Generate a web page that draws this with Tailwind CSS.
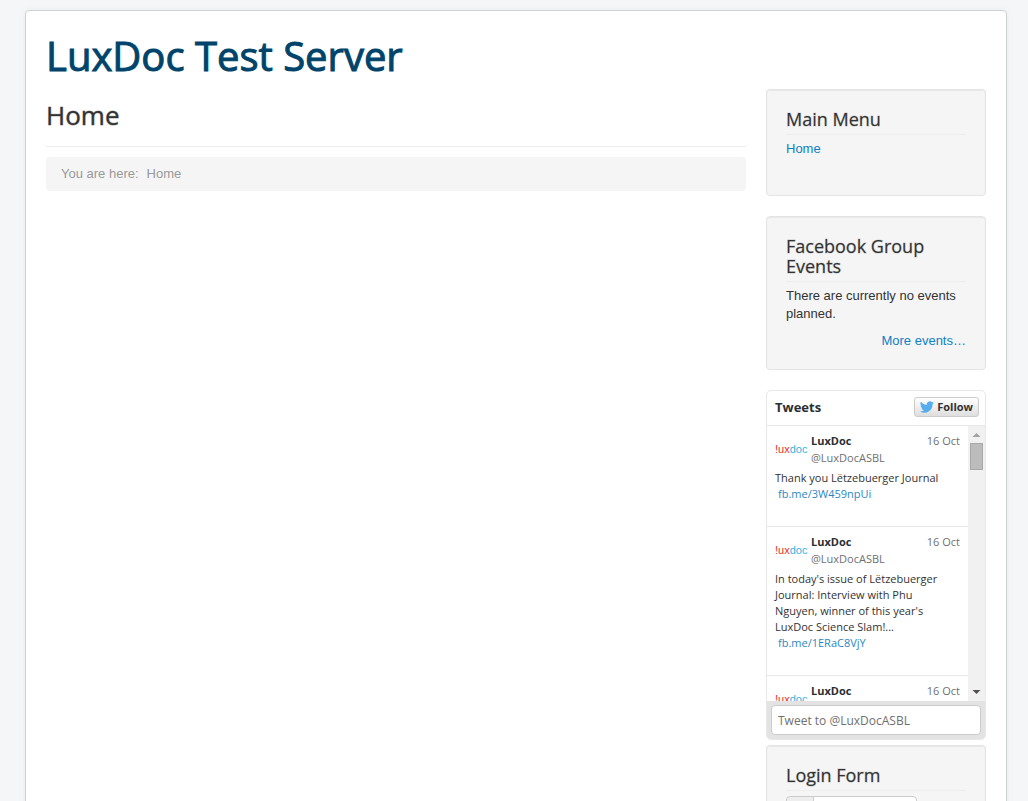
<!DOCTYPE html>
<html lang="en">
<head>
<meta charset="utf-8">
<title>Home</title>
<script src="https://cdn.jsdelivr.net/npm/@tailwindcss/browser@4"></script>
</head>
<body class="h-screen overflow-hidden bg-[#f4f6f7] pt-[10px] pr-[21px] pl-[25px] font-['Liberation_Sans',Arial,sans-serif] text-[13px] leading-[18px] text-[#333]">
<svg class="hidden" aria-hidden="true">
  <symbol id="bird" viewBox="0 0 24 24"><path d="M23.9 4.6a10 10 0 0 1-2.8.8 4.9 4.9 0 0 0 2.2-2.7c-1 .6-2 1-3.1 1.2a4.9 4.9 0 0 0-8.4 4.5C7.700 8.200 4.100 6.200 1.600 3.200a4.900 4.900 0 0 0 1.500 6.600 4.900 4.900 0 0 1-2.200-.6v.1a4.900 4.900 0 0 0 3.900 4.800 5 5 0 0 1-2.200.1 4.900 4.900 0 0 0 4.600 3.400A9.900 9.900 0 0 1 0 19.500a14 14 0 0 0 7.500 2.200c9.100 0 14-7.500 14-14v-.6a10 10 0 0 0 2.400-2.500z" fill="#55acee"/></symbol>
</svg>
<div class="min-h-[900px] rounded border border-[#cfd2d4] bg-white p-5 shadow-[0_0_6px_rgba(0,0,0,0.05)]">
  <header>
    <a href="#" class="block font-['Open_Sans',sans-serif] text-[40px] leading-[50px] text-[#00446b] [-webkit-text-stroke:1px_#00446b]">LuxDoc Test Server</a>
  </header>
  <div class="mt-2 flex items-start gap-5">
    <main class="min-w-0 flex-1">
      <h1 class="border-b border-[#eee] pt-2 pb-[13px] font-['Open_Sans',sans-serif] text-[26px] leading-9 [-webkit-text-stroke:1px_#33333370]">Home</h1>
      <nav aria-label="Breadcrumb" class="mt-[10px] rounded bg-[#f5f5f5] px-[15px] py-2 text-[#999]">
        <ul class="flex gap-2"><li>You are here:</li><li>Home</li></ul>
      </nav>
    </main>
    <aside class="w-[220px] shrink-0">
      <section class="mb-5 rounded border border-[#e3e3e3] bg-[#f5f5f5] p-[19px] pb-[37px] shadow-[inset_0_1px_1px_rgba(0,0,0,0.05)]">
        <h3 class="mb-[5px] border-b border-[#eee] pb-[5px] font-['Open_Sans',sans-serif] text-lg leading-5 [-webkit-text-stroke:1px_#33333340]">Main Menu</h3>
        <ul><li><a href="#" class="text-[#0d80c8]">Home</a></li></ul>
      </section>
      <section class="mb-5 rounded border border-[#e3e3e3] bg-[#f5f5f5] p-[19px] shadow-[inset_0_1px_1px_rgba(0,0,0,0.05)]">
        <h3 class="mb-[5px] border-b border-[#eee] pb-[5px] font-['Open_Sans',sans-serif] text-lg leading-5 [-webkit-text-stroke:1px_#33333340]">Facebook Group Events</h3>
        <p>There are currently no events planned.</p>
        <p class="mt-[9px] text-right"><a href="#" class="text-[#0d80c8]">More events…</a></p>
      </section>
      <section class="mb-[5px] overflow-hidden rounded-[5px] border border-[#e8e8e8] bg-white font-['Open_Sans',sans-serif] text-[11px] leading-4">
        <header class="flex h-[35px] items-center justify-between border-b border-[#e8e8e8] pr-[6px] pb-[2px] pl-2">
          <h2 class="text-[13px] font-bold text-[#292f33]">Tweets</h2>
          <button class="flex h-5 items-center gap-[3px] rounded-[3px] border border-[#ccc] bg-linear-to-b from-white to-[#dedede] px-[5px] text-[11px] font-bold text-[#333]"><svg class="size-[14px]" aria-hidden="true"><use href="#bird"/></svg>Follow</button>
        </header>
        <div class="flex h-[275px]">
          <ol class="min-w-0 flex-1 overflow-hidden">
            <li class="h-[101px] border-b border-[#e8e8e8] px-2 pt-[7px]">
              <div class="flex gap-1"><span class="w-8 shrink-0 pt-2 font-['Liberation_Sans',sans-serif] text-[11px] text-[#30b6dc]"><span class="text-[#e8302a]">!ux</span>doc</span><a href="#" class="flex-1"><b class="mb-px block text-[#292f33]">LuxDoc</b><span class="block text-[#707070]">@LuxDocASBL</span></a><time class="text-[#707070]">16 Oct</time></div>
              <p class="mt-1">Thank you Lëtzebuerger Journal<br><a href="#" class="ml-[3px] text-[#2b88c4]">fb.me/3W459npUi</a></p>
            </li>
            <li class="h-[149px] border-b border-[#e8e8e8] px-2 pt-[7px]">
              <div class="flex gap-1"><span class="w-8 shrink-0 pt-2 font-['Liberation_Sans',sans-serif] text-[11px] text-[#30b6dc]"><span class="text-[#e8302a]">!ux</span>doc</span><a href="#" class="flex-1"><b class="mb-px block text-[#292f33]">LuxDoc</b><span class="block text-[#707070]">@LuxDocASBL</span></a><time class="text-[#707070]">16 Oct</time></div>
              <p class="mt-1">In today's issue of Lëtzebuerger<br>Journal: Interview with Phu<br>Nguyen, winner of this year's<br>LuxDoc Science Slam!...<br><a href="#" class="ml-[3px] text-[#2b88c4]">fb.me/1ERaC8VjY</a></p>
            </li>
            <li class="px-2 pt-[7px]">
              <div class="flex gap-1"><span class="w-8 shrink-0 pt-2 font-['Liberation_Sans',sans-serif] text-[11px] text-[#30b6dc]"><span class="text-[#e8302a]">!ux</span>doc</span><a href="#" class="flex-1"><b class="block text-[#292f33]">LuxDoc</b></a><time class="text-[#707070]">16 Oct</time></div>
            </li>
          </ol>
          <div class="flex w-[17px] flex-col items-center bg-[#f1f1f1]" aria-hidden="true">
            <svg class="h-[17px] w-[17px]" viewBox="0 0 17 17"><path d="M8.500 7 12.500 11H4.500z" fill="#a3a3a3"/></svg>
            <div class="h-[27px] w-[13px] border border-[#a8a8a8] bg-[#bcbcbc]"></div>
            <svg class="mt-auto h-[17px] w-[17px]" viewBox="0 0 17 17"><path d="M4.500 6h8l-4 4z" fill="#505050"/></svg>
          </div>
        </div>
        <div class="bg-[#e3e3e3] p-1"><input type="text" aria-label="Tweet to @LuxDocASBL" placeholder="Tweet to @LuxDocASBL" class="block h-[30px] w-full rounded border border-[#ccc] bg-white px-[6px] text-xs placeholder:text-[#707070]"></div>
      </section>
      <section class="rounded border border-[#e3e3e3] bg-[#f5f5f5] p-[19px] shadow-[inset_0_1px_1px_rgba(0,0,0,0.05)]">
        <h3 class="mb-[5px] border-b border-[#eee] pb-[5px] font-['Open_Sans',sans-serif] text-lg leading-5 [-webkit-text-stroke:1px_#33333340]">Login Form</h3>
        <form class="flex"><label for="user" class="h-7 w-7 rounded-l border border-[#ccc] bg-[#eee]"></label><input id="user" type="text" aria-label="User Name" class="-ml-px h-7 w-[104px] rounded-r border border-[#ccc] bg-white px-1"></form>
      </section>
    </aside>
  </div>
</div>
</body>
</html>
